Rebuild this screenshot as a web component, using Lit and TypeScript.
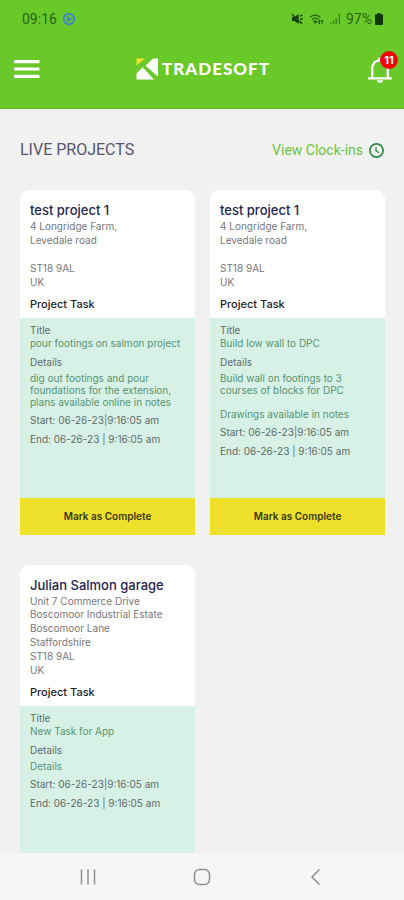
import { LitElement, html, css, svg, nothing } from "lit";
import { customElement, property } from "lit/decorators.js";

interface Project {
  name: string;
  address: string[];
  title: string;
  details: string;
  date: string;
  time: string;
  canComplete: boolean;
}

const projects: Project[] = [
  {
    name: "test project 1",
    address: ["4 Longridge Farm,", "Levedale road", "", "ST18 9AL", "UK"],
    title: "pour footings on salmon project",
    details: "dig out footings and pour foundations for the extension, plans available online in notes",
    date: "06-26-23",
    time: "9:16:05 am",
    canComplete: true,
  },
  {
    name: "test project 1",
    address: ["4 Longridge Farm,", "Levedale road", "", "ST18 9AL", "UK"],
    title: "Build low wall to DPC",
    details: "Build wall on footings to 3 courses of blocks for DPC\n\nDrawings available in notes",
    date: "06-26-23",
    time: "9:16:05 am",
    canComplete: true,
  },
  {
    name: "Julian Salmon garage",
    address: [
      "Unit 7 Commerce Drive Boscomoor Industrial Estate",
      "Boscomoor Lane",
      "Staffordshire",
      "ST18 9AL",
      "UK",
    ],
    title: "New Task for App",
    details: "Details",
    date: "06-26-23",
    time: "9:16:05 am",
    canComplete: false,
  },
];

@customElement("status-bar")
export class StatusBar extends LitElement {
  static styles = css`
    :host {
      display: flex;
      align-items: center;
      justify-content: space-between;
      height: 38px;
      padding: 0 21px 0 22px;
      font: 14px/18px Roboto, sans-serif;
      color: #2c6312;
    }
    .group {
      display: flex;
      align-items: center;
      gap: 5px;
    }
    .battery {
      display: flex;
      align-items: center;
      gap: 3px;
    }
    svg {
      display: block;
    }
  `;

  render() {
    return html`
      <div class="group">
        <span>09:16</span>
        <svg width="14" height="14" viewBox="0 0 14 14" aria-hidden="true">
          <circle cx="7" cy="7" r="5.2" fill="none" stroke="#4585d0" stroke-width="2" />
          <path d="M5 3.800 10.400 7 5 10.200Z" fill="#4585d0" />
        </svg>
      </div>
      <div class="group">
        <svg width="13" height="12" viewBox="0 0 13 12" aria-hidden="true">
          <path d="M1 4h2.6L7.6 1v10L3.6 8H1Z" fill="#123c08" />
          <path d="M1 1.2 11 11M9 3.4l2.4-1.6M9 6h3M9 8.4l2 1.4" stroke="#1d4d0e" stroke-width="1.3" fill="none" />
        </svg>
        <svg width="15" height="12" viewBox="0 0 15 12" aria-hidden="true">
          <path d="M1 4.2Q6 .2 11.4 4.2M3 6.4q3.2-2.4 6.4 0M5 8.4q1.3-.9 2.6 0L6.3 10Z" stroke="#2c6312" stroke-width="1.3" fill="none" />
          <path d="M10.4 6.5v4M9 9l1.400 1.800M13 11V7.200M11.800 8.400 13 7l1.300 1.400" stroke="#1d4d0e" stroke-width="1" fill="none" />
        </svg>
        <svg width="12" height="12" viewBox="0 0 12 12" aria-hidden="true">
          <path d="M2 11V9.500M4.600 11V7.500M7.200 11V5M10.300 11V1" stroke="#3b7d1a" stroke-width="1.300" fill="none" />
        </svg>
        <span class="battery">
          <span>97%</span>
          <svg width="8" height="12" viewBox="0 0 8 12" aria-hidden="true">
            <path d="M2.500 0h3v1.200H7a1 1 0 0 1 1 1V11a1 1 0 0 1-1 1H1a1 1 0 0 1-1-1V2.200a1 1 0 0 1 1-1h1.500Z" fill="#12350a" />
          </svg>
        </span>
      </div>
    `;
  }
}

@customElement("app-header")
export class AppHeader extends LitElement {
  static styles = css`
    :host {
      display: block;
      flex: none;
      background: #68c928;
      border-bottom: 1px solid #5abb1e;
    }
    .bar {
      display: grid;
      grid-template-columns: 1fr auto 1fr;
      align-items: center;
      box-sizing: border-box;
      height: 70px;
      padding: 0 12px 8px 14px;
    }
    button {
      display: block;
      padding: 0;
      border: 0;
      background: none;
      cursor: pointer;
    }
    svg {
      display: block;
    }
    .menu {
      justify-self: start;
    }
    .logo {
      display: flex;
      align-items: center;
      gap: 4px;
      color: #fff;
      font: 900 17px/22px Lato, sans-serif;
      letter-spacing: 1px;
      text-decoration: none;
    }
    .bell {
      position: relative;
      justify-self: end;
    }
    .badge {
      position: absolute;
      top: -5px;
      right: -6px;
      width: 18px;
      height: 18px;
      border-radius: 50%;
      background: #f5060c;
      color: #fff;
      font: 700 11px/18px Inter, sans-serif;
      text-align: center;
    }
  `;

  render() {
    return html`
      <status-bar></status-bar>
      <div class="bar">
        <button class="menu" aria-label="Menu">
          <svg width="26" height="18" viewBox="0 0 26 18">
            <path d="M0 1.700h25.500M0 9h25.500M0 16.300h25.500" stroke="#fff" stroke-width="3.200" />
          </svg>
        </button>
        <a class="logo" href="#">
          <svg width="22" height="22" viewBox="0 0 22 22" aria-hidden="true">
            <path d="M.5.500H9L.5 7.500Z" fill="#f2e22c" />
            <path d="M22 .5V18.500L9.500 7.700 17 .5Z" fill="#fff" />
            <path d="M6.800 9.300 18 21.500H.5V15.500Z" fill="#fff" />
          </svg>
          <span>TRADESOFT</span>
        </a>
        <button class="bell" aria-label="Notifications">
          <svg width="24" height="27" viewBox="0 0 24 27">
            <path
              d="M4.200 22V12.500C4.200 7.500 7.600 4.200 12 4.200s7.800 3.300 7.800 8.300V22"
              fill="none"
              stroke="#fff"
              stroke-width="2.400"
            />
            <path d="M1 22.400h22" stroke="#fff" stroke-width="2.400" stroke-linecap="round" />
            <path d="M12 1.500v3" stroke="#fff" stroke-width="3" />
            <path d="M9 24.300h6a3 2.500 0 0 1-6 0Z" fill="#fff" />
          </svg>
          <span class="badge">11</span>
        </button>
      </div>
    `;
  }
}

@customElement("project-card")
export class ProjectCard extends LitElement {
  @property({ attribute: false }) project!: Project;

  static styles = css`
    :host {
      display: flex;
      flex-direction: column;
      overflow: hidden;
      border-radius: 9px 9px 0 0;
      background: #fff;
      font: 10px/12px Inter, sans-serif;
      color: #5d6b68;
    }
    h2,
    h3,
    p {
      margin: 0;
    }
    .summary {
      padding: 10px 10px 6px;
    }
    h2 {
      font-size: 13px;
      line-height: 20px;
      font-weight: 500;
      color: #25254f;
    }
    .address {
      display: flex;
      flex-direction: column;
      gap: 1px;
      line-height: 13px;
      color: #77777c;
    }
    .address p {
      min-height: 13px;
    }
    h3 {
      margin-top: 7px;
      font-size: 11px;
      line-height: 16px;
      font-weight: 500;
      color: #222;
    }
    .task {
      box-sizing: border-box;
      min-height: 180px;
      padding: 6px 10px;
      background: #d7f1e7;
    }
    .value {
      margin-top: 1px;
      color: #569470;
    }
    .label-details {
      margin-top: 7px;
    }
    .details {
      margin-top: 4px;
      white-space: pre-line;
      color: #569470;
    }
    .start {
      margin-top: 6px;
    }
    .end {
      margin-top: 7px;
    }
    button {
      height: 37px;
      padding: 0 0 2px;
      border: 0;
      background: #efe02c;
      color: #3c3a14;
      font: 600 10px/12px Inter, sans-serif;
      cursor: pointer;
    }
  `;

  render() {
    const p = this.project;
    return html`
      <div class="summary">
        <h2>${p.name}</h2>
        <div class="address">${p.address.map((line) => html`<p>${line}</p>`)}</div>
        <h3>Project Task</h3>
      </div>
      <div class="task">
        <p>Title</p>
        <p class="value">${p.title}</p>
        <p class="label-details">Details</p>
        <p class="details">${p.details}</p>
        <p class="start">Start: ${p.date}|${p.time}</p>
        <p class="end">End: ${p.date} | ${p.time}</p>
      </div>
      ${p.canComplete ? html`<button>Mark as Complete</button>` : nothing}
    `;
  }
}

@customElement("system-nav")
export class SystemNav extends LitElement {
  static styles = css`
    :host {
      display: flex;
      flex: none;
      justify-content: center;
      align-items: center;
      gap: 90px;
      height: 47px;
      background: #f6f6f6;
    }
    button {
      width: 24px;
      height: 24px;
      padding: 0;
      border: 0;
      background: none;
    }
    svg {
      display: block;
    }
  `;

  private icon(label: string, shape: unknown) {
    return html`<button aria-label=${label}>
      <svg width="24" height="24" viewBox="0 0 24 24" fill="none" stroke="#8f8f8f" stroke-width="1.500">${shape}</svg>
    </button>`;
  }

  render() {
    return html`
      ${this.icon("Recent apps", svg`<path d="M5.500 4.500v15M12 4.500v15M18.500 4.500v15" />`)}
      ${this.icon("Home", svg`<rect x="4.500" y="4.500" width="15" height="15" rx="5" />`)}
      ${this.icon("Back", svg`<path d="M15.500 4.500 8 12l7.500 7.500" />`)}
    `;
  }
}

@customElement("app-root")
export class AppRoot extends LitElement {
  static styles = css`
    :host {
      display: flex;
      flex-direction: column;
      height: 100vh;
      background: #f1f1f1;
    }
    main {
      flex: 1;
      min-height: 0;
      overflow-y: auto;
      scrollbar-width: none;
      padding: 0 19px 0 20px;
    }
    .heading {
      display: flex;
      justify-content: space-between;
      align-items: center;
      padding: 31px 0 30px;
      font: 16px/20px Roboto, sans-serif;
    }
    h1 {
      margin: 0;
      font: inherit;
      color: #55556f;
    }
    .clock-ins {
      display: flex;
      align-items: center;
      gap: 5px;
      color: #6cc53c;
      font-size: 14px;
      text-decoration: none;
    }
    .grid {
      display: grid;
      grid-template-columns: repeat(auto-fill, minmax(160px, 1fr));
      gap: 30px 15px;
      padding-bottom: 30px;
    }
  `;

  render() {
    return html`
      <app-header></app-header>
      <main>
        <div class="heading">
          <h1>LIVE PROJECTS</h1>
          <a class="clock-ins" href="#">
            <span>View Clock-ins</span>
            <svg width="17" height="17" viewBox="0 0 17 17" fill="none" stroke="#2f8a45" aria-hidden="true">
              <circle cx="8.500" cy="8.500" r="6.600" stroke-width="1.700" />
              <path d="M8 5v3.800l3 1.900" stroke-width="1.300" />
            </svg>
          </a>
        </div>
        <div class="grid">
          ${projects.map((p) => html`<project-card .project=${p}></project-card>`)}
        </div>
      </main>
      <system-nav></system-nav>
    `;
  }
}
